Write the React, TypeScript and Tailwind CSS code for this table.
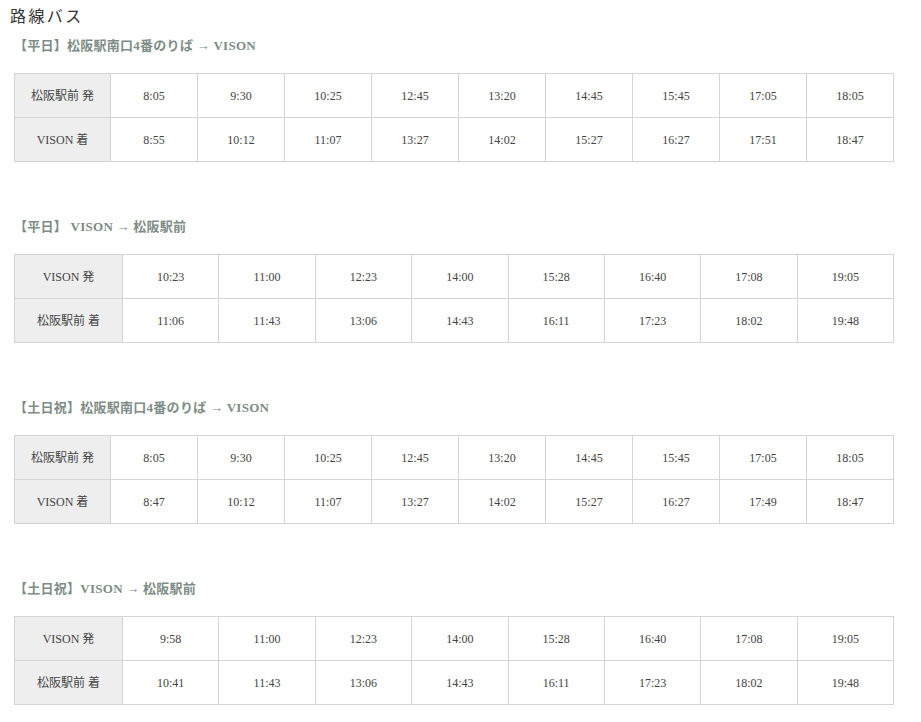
import React from "react";

type Timetable = {
  title: string;
  firstCol: number;
  rows: { label: string; times: string[] }[];
};

const tables: Timetable[] = [
  {
    title: "【平日】松阪駅南口4番のりば → VISON",
    firstCol: 96,
    rows: [
      { label: "松阪駅前 発", times: ["8:05", "9:30", "10:25", "12:45", "13:20", "14:45", "15:45", "17:05", "18:05"] },
      { label: "VISON 着", times: ["8:55", "10:12", "11:07", "13:27", "14:02", "15:27", "16:27", "17:51", "18:47"] },
    ],
  },
  {
    title: "【平日】 VISON → 松阪駅前",
    firstCol: 108,
    rows: [
      { label: "VISON 発", times: ["10:23", "11:00", "12:23", "14:00", "15:28", "16:40", "17:08", "19:05"] },
      { label: "松阪駅前 着", times: ["11:06", "11:43", "13:06", "14:43", "16:11", "17:23", "18:02", "19:48"] },
    ],
  },
  {
    title: "【土日祝】松阪駅南口4番のりば → VISON",
    firstCol: 96,
    rows: [
      { label: "松阪駅前 発", times: ["8:05", "9:30", "10:25", "12:45", "13:20", "14:45", "15:45", "17:05", "18:05"] },
      { label: "VISON 着", times: ["8:47", "10:12", "11:07", "13:27", "14:02", "15:27", "16:27", "17:49", "18:47"] },
    ],
  },
  {
    title: "【土日祝】VISON → 松阪駅前",
    firstCol: 108,
    rows: [
      { label: "VISON 発", times: ["9:58", "11:00", "12:23", "14:00", "15:28", "16:40", "17:08", "19:05"] },
      { label: "松阪駅前 着", times: ["10:41", "11:43", "13:06", "14:43", "16:11", "17:23", "18:02", "19:48"] },
    ],
  },
];

const font = { fontFamily: '"Liberation Serif", "Noto Sans CJK JP", serif' };

function TimeTable({ table, first }: { table: Timetable; first: boolean }) {
  const n = table.rows[0].times.length;
  const rest = (879 - table.firstCol) / n;
  return (
    <section className={first ? "mt-[8px]" : "mt-[55px]"}>
      <h3 className="text-[13px] font-bold leading-[20px] text-[#7d8c86] tracking-[0.02em]">
        {table.title}
      </h3>
      <table className="mt-[17px] w-[879px] border-collapse table-fixed text-[12px] text-[#444]">
        <colgroup>
          <col style={{ width: table.firstCol }} />
          {table.rows[0].times.map((_, i) => (
            <col key={i} style={{ width: rest }} />
          ))}
        </colgroup>
        <tbody>
          {table.rows.map((row) => (
            <tr key={row.label} className="h-[44px]">
              <th className="border border-[#d4d4d4] bg-[#eeeeee] font-normal text-center text-[#444]">
                {row.label}
              </th>
              {row.times.map((t, i) => (
                <td key={i} className="border border-[#d4d4d4] text-center">
                  {t}
                </td>
              ))}
            </tr>
          ))}
        </tbody>
      </table>
    </section>
  );
}

export default function App() {
  return (
    <div className="bg-white min-h-[722px] pl-[14px] pt-[6px]" style={font}>
      <h2 className="-ml-[4px] text-[16px] leading-[22px] tracking-[0.15em] text-[#333]">路線バス</h2>
      {tables.map((t, i) => (
        <TimeTable key={t.title} table={t} first={i === 0} />
      ))}
    </div>
  );
}
